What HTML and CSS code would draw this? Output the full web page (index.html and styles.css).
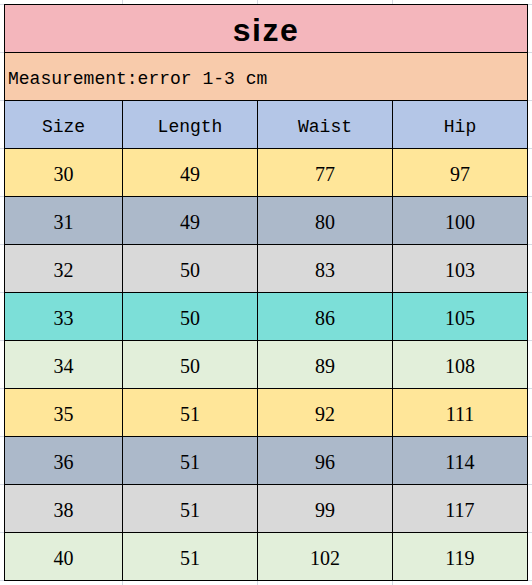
FILE: index.html
```
<!DOCTYPE html>
<html>
<head>
<meta charset="utf-8">
<link rel="stylesheet" href="styles.css">
</head>
<body>
<div class="sheet">
  <div class="chart">
    <div class="title">size</div>
    <div class="note">Measurement:error 1-3 cm</div>
    <div class="row head"><div>Size</div><div>Length</div><div>Waist</div><div>Hip</div></div>
    <div class="row yellow"><div>30</div><div>49</div><div>77</div><div>97</div></div>
    <div class="row slate"><div>31</div><div>49</div><div>80</div><div>100</div></div>
    <div class="row gray"><div>32</div><div>50</div><div>83</div><div>103</div></div>
    <div class="row teal"><div>33</div><div>50</div><div>86</div><div>105</div></div>
    <div class="row green"><div>34</div><div>50</div><div>89</div><div>108</div></div>
    <div class="row yellow"><div>35</div><div>51</div><div>92</div><div>111</div></div>
    <div class="row slate"><div>36</div><div>51</div><div>96</div><div>114</div></div>
    <div class="row gray"><div>38</div><div>51</div><div>99</div><div>117</div></div>
    <div class="row green"><div>40</div><div>51</div><div>102</div><div>119</div></div>
  </div>
</div>
</body>
</html>
```
FILE: styles.css
```
html, body {
  margin: 0;
  padding: 0;
  background: #ffffff;
}
.sheet {
  width: 532px;
  height: 585px;
  box-sizing: border-box;
  padding: 4px;
  background-image:
    linear-gradient(to right, transparent 122px, #d5dae3 122px, #d5dae3 123px, transparent 123px),
    linear-gradient(to right, transparent 257px, #d5dae3 257px, #d5dae3 258px, transparent 258px),
    linear-gradient(to right, transparent 392px, #d5dae3 392px, #d5dae3 393px, transparent 393px),
    repeating-linear-gradient(to bottom, #d5dae3 0, #d5dae3 1px, transparent 1px, transparent 48px);
  background-position: 0 0, 0 0, 0 0, 0 4px;
}
.chart {
  display: grid;
  grid-template-columns: 117px 134px 134px 134px;
  grid-auto-rows: 47px;
  gap: 1px;
  padding: 1px;
  background: #000;
  width: max-content;
}
.row {
  display: contents;
}
.chart > div > div,
.title,
.note {
  display: flex;
  align-items: center;
  justify-content: center;
  font-family: "Liberation Serif", "Times New Roman", serif;
  font-size: 20px;
  color: #000;
}
.title {
  grid-column: 1 / -1;
  background: #f4b6bc;
  font-family: "Liberation Sans", Arial, sans-serif;
  font-weight: bold;
  font-size: 32px;
  letter-spacing: 1.5px;
  padding-top: 4px;
  box-sizing: border-box;
}
.note {
  grid-column: 1 / -1;
  background: #f8cbab;
  justify-content: flex-start;
  padding: 4px 0 0 3px;
  box-sizing: border-box;
  font-family: "Liberation Mono", "Courier New", monospace;
  font-size: 18px;
}
.row.head > div {
  background: #b4c6e7;
  font-family: "Liberation Mono", "Courier New", monospace;
  font-size: 18px;
  padding-top: 4px;
  box-sizing: border-box;
}
.row > div {
  padding-top: 4px;
  box-sizing: border-box;
}
.yellow > div { background: #ffe699; }
.slate > div { background: #acb9ca; }
.gray > div { background: #d9d9d9; }
.teal > div { background: #7cdfd8; }
.green > div { background: #e2efda; }
```
